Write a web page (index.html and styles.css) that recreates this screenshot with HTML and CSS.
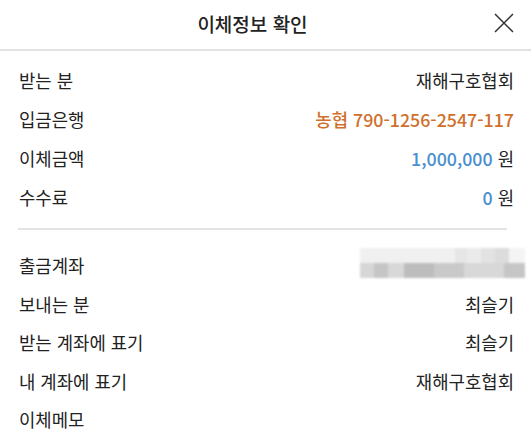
FILE: index.html
```html
<!DOCTYPE html>
<html lang="ko">
<head>
<meta charset="utf-8">
<title>이체정보 확인</title>
<link rel="stylesheet" href="styles.css">
</head>
<body>
<div class="sheet">
  <header class="header">
    <h1 class="title">이체정보 확인</h1>
    <button class="close" aria-label="닫기">
      <svg width="22" height="22" viewBox="0 0 22 22"><path d="M2 2 L20 20 M20 2 L2 20" stroke="#333" stroke-width="1.5" fill="none"/></svg>
    </button>
  </header>
  <section class="group group-top">
    <div class="row"><span class="label">받는 분</span><span class="value">재해구호협회</span></div>
    <div class="row"><span class="label">입금은행</span><span class="value orange">농협 790-1256-2547-117</span></div>
    <div class="row"><span class="label">이체금액</span><span class="value"><span class="blue">1,000,000</span> 원</span></div>
    <div class="row"><span class="label">수수료</span><span class="value"><span class="blue">0</span> 원</span></div>
  </section>
  <hr class="divider">
  <section class="group group-bottom">
    <div class="row"><span class="label">출금계좌</span>
      <span class="blurred" aria-hidden="true">
        <span class="blur-line light"><i class="b1"></i><i class="b2"></i><i class="b3"></i><i class="b4"></i><i class="b5"></i><i class="b6"></i></span>
        <span class="blur-line dark"><i class="c1"></i><i class="c2"></i><i class="c3"></i><i class="c4"></i><i class="c5"></i><i class="c6"></i><i class="c7"></i></span>
      </span>
    </div>
    <div class="row"><span class="label">보내는 분</span><span class="value">최슬기</span></div>
    <div class="row"><span class="label">받는 계좌에 표기</span><span class="value">최슬기</span></div>
    <div class="row"><span class="label">내 계좌에 표기</span><span class="value">재해구호협회</span></div>
    <div class="row"><span class="label">이체메모</span><span class="value"></span></div>
  </section>
</div>
</body>
</html>
```
FILE: styles.css
```css
* { box-sizing: border-box; }
html, body { margin: 0; padding: 0; background: #fff; }
body {
  font-family: "Noto Sans CJK KR", "Noto Sans", sans-serif;
  color: #222;
  width: 531px;
  height: 438px;
  overflow: hidden;
}
.sheet { display: flex; flex-direction: column; }
.header {
  position: relative;
  height: 51px;
  border-bottom: 2px solid #e2e2e2;
  display: flex;
  align-items: center;
  justify-content: center;
}
.title {
  margin: 0 26px 2px 0;
  font-size: 19px;
  font-weight: 500;
  color: #222;
  line-height: 1;
}
.close {
  position: absolute;
  right: 16px;
  top: 12px;
  width: 22px;
  height: 22px;
  padding: 0;
  border: 0;
  background: none;
  display: flex;
  align-items: center;
  justify-content: center;
}
.group { display: flex; flex-direction: column; padding: 0 17px 0 19px; }
.group-top { padding-top: 9px; padding-bottom: 12px; }
.group-bottom { padding-top: 16px; }
.row {
  height: 39px;
  display: flex;
  align-items: center;
  justify-content: space-between;
  font-size: 17.8px;
}
.group-bottom .row { height: 38.5px; }
.label { color: #222; }
.value { color: #222; }
.orange { color: #d0702c; font-weight: 500; }
.blue { color: #4a8fcf; font-weight: 500; }
.divider {
  margin: 0 24px 0 18px;
  border: 0;
  border-top: 2px solid #e4e4e4;
  height: 0;
}
.blurred {
  display: flex;
  flex-direction: column;
  width: 165px;
  height: 30px;
  margin-right: -11px;
  margin-top: -4px;
  filter: blur(1.2px);
}
.blur-line { display: flex; height: 15px; }
.blur-line i { display: block; height: 100%; }
.light i { background: #ececec; }
.light .b1 { width: 95px; background: #f0f0f0; }
.light .b2 { width: 12px; background: #e6e6e6; }
.light .b3 { width: 14px; background: #ebebeb; }
.light .b4 { width: 14px; background: #e2e2e2; }
.light .b5 { width: 14px; background: #dcdcdc; }
.light .b6 { width: 16px; background: #f4f4f4; }
.dark .c1 { width: 14px; background: #d6d6d6; }
.dark .c2 { width: 14px; background: #c6c6c6; }
.dark .c3 { width: 16px; background: #d8d8d8; }
.dark .c4 { width: 30px; background: #bdbdbd; }
.dark .c5 { width: 30px; background: #c9c9c9; }
.dark .c6 { width: 40px; background: #d8d8d8; }
.dark .c7 { width: 21px; background: #c6c6c6; }
```
